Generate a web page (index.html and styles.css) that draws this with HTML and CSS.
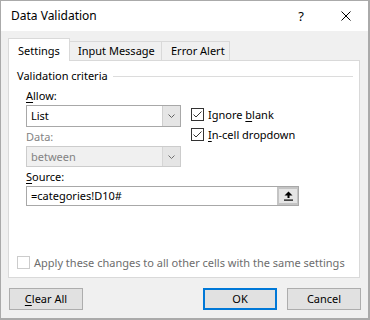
FILE: index.html
```html
<!DOCTYPE html>
<html>
<head>
<meta charset="utf-8">
<link rel="stylesheet" href="styles.css">
</head>
<body>
<div class="window">
  <div class="titlebar">
    <span class="title">Data Validation</span>
    <span class="help">?</span>
    <svg class="close" width="10" height="10" viewBox="0 0 10 10"><path d="M0.5 0.5 L9.5 9.5 M9.5 0.5 L0.5 9.5" stroke="#000" stroke-width="1" fill="none"/></svg>
  </div>
  <div class="client">
    <div class="tabs">
      <div class="tab active">Settings</div>
      <div class="tab">Input Message</div>
      <div class="tab">Error Alert</div>
    </div>
    <div class="panel">
      <div class="group-title"><span>Validation criteria</span><span class="rule"></span></div>
      <div class="criteria">
        <div class="row-top">
          <div class="left-col">
            <div class="label"><u>A</u>llow:</div>
            <div class="combo">
              <span class="value">List</span>
              <span class="drop"><svg width="7" height="4" viewBox="0 0 7 4"><path d="M0.5 0.5 L3.5 3.5 L6.5 0.5" stroke="#606060" fill="none"/></svg></span>
            </div>
            <div class="label disabled">Data:</div>
            <div class="combo off">
              <span class="value">between</span>
              <span class="drop"><svg width="7" height="4" viewBox="0 0 7 4"><path d="M0.5 0.5 L3.5 3.5 L6.5 0.5" stroke="#707070" fill="none"/></svg></span>
            </div>
          </div>
          <div class="right-col">
            <div class="check"><span class="box"><svg width="11" height="11" viewBox="0 0 11 11"><path d="M1.5 5.5 L4 8 L9.5 2.5" stroke="#333" stroke-width="1" fill="none"/></svg></span><span>Ignore <u>b</u>lank</span></div>
            <div class="check"><span class="box"><svg width="11" height="11" viewBox="0 0 11 11"><path d="M1.5 5.5 L4 8 L9.5 2.5" stroke="#333" stroke-width="1" fill="none"/></svg></span><span><u>I</u>n-cell dropdown</span></div>
          </div>
        </div>
        <div class="label"><u>S</u>ource:</div>
        <div class="source">
          <span class="value">=categories!D10#</span>
          <span class="pick"><svg width="9" height="10" viewBox="0 0 9 10"><path d="M4.5 0.5 L8.5 4.5 L5.5 4.5 L5.5 7 L3.5 7 L3.5 4.5 L0.5 4.5 Z" fill="#000"/><rect x="0" y="8.5" width="9" height="1.2" fill="#000"/></svg></span>
        </div>
      </div>
      <div class="apply"><span class="box dis"></span><span>Apply these changes to all other cells with the same settings</span></div>
    </div>
    <div class="buttons">
      <div class="btn"><u>C</u>lear All</div>
      <div class="spacer"></div>
      <div class="btn default">OK</div>
      <div class="btn">Cancel</div>
    </div>
  </div>
</div>
</body>
</html>
```
FILE: styles.css
```css
html, body {
  margin: 0;
  padding: 0;
  background: #fff;
}
body {
  font-family: "Noto Sans", "Open Sans", sans-serif;
  font-size: 11px;
  color: #000;
  white-space: nowrap;
}
u { text-decoration: underline; text-underline-offset: 2px; }
.window {
  width: 370px;
  height: 320px;
  box-sizing: border-box;
  border: 1px solid #aaaaaa;
  border-right-width: 2px;
  border-bottom-width: 2px;
  display: flex;
  flex-direction: column;
  background: #f0f0f0;
}
.titlebar {
  height: 30px;
  background: #fff;
  display: flex;
  align-items: center;
  padding-left: 10px;
  flex: none;
  font-size: 12px;
}
.title { flex: 1; line-height: 16px; }
.help { font-size: 13px; margin-right: 37px; }
.close { margin-right: 17px; }
.client {
  flex: 1;
  padding: 7px 7px 0 7px;
  display: flex;
  flex-direction: column;
}
.tabs {
  display: flex;
  align-items: flex-end;
  height: 22px;
  position: relative;
  z-index: 1;
}
.tab {
  height: 19px;
  box-sizing: border-box;
  border: 1px solid #d9d9d9;
  border-bottom: none;
  line-height: 18px;
  background: #f0f0f0;
  margin-left: -1px;
}
.tab:nth-child(2) { width: 93px; padding: 0 0 0 8px; }
.tab:nth-child(3) { width: 69px; padding: 0 0 0 9px; }
.tab.active {
  height: 23px;
  margin-bottom: -1px;
  background: #fff;
  width: 62px;
  padding: 0 0 0 9px;
  line-height: 24px;
  margin-left: 0;
}
.panel {
  height: 218px;
  box-sizing: border-box;
  width: 352px;
  background: #fff;
  border: 1px solid #d9d9d9;
  display: flex;
  flex-direction: column;
  padding: 7px 0 7px 8px;
}
.group-title {
  display: flex;
  align-items: center;
  line-height: 16px;
  height: 16px;
}
.rule {
  flex: 1;
  height: 1px;
  background: #dcdcdc;
  margin-left: 5px;
  margin-right: 6px;
}
.criteria {
  padding-left: 9px;
  margin-top: 4px;
  flex: 1;
}
.row-top { display: flex; }
.left-col { width: 155px; }
.label { line-height: 16px; height: 16px; }
.label.disabled { color: #838383; margin-top: 2px; }
.combo {
  margin-top: 1px;
  height: 22px;
  box-sizing: border-box;
  border: 1px solid #a8a8a8;
  display: flex;
  align-items: stretch;
  background: #fff;
}
.combo .value { flex: 1; padding-left: 4px; line-height: 20px; }
.combo .drop {
  width: 17px;
  background: #e5e5e5;
  border-left: 1px solid #cfcfcf;
  display: flex;
  align-items: center;
  justify-content: center;
}
.combo.off {
  height: 21px;
  border-color: #cccccc;
  background: #f0f0f0;
  color: #838383;
}
.combo.off .value { line-height: 19px; }
.combo.off .drop { background: #e5e5e5; border-left-color: #d6d6d6; }
.right-col { margin-left: 10px; padding-top: 16px; }
.check {
  height: 20px;
  display: flex;
  align-items: center;
}
.box {
  width: 13px;
  height: 13px;
  flex: none;
  box-sizing: border-box;
  border: 1px solid #333;
  background: #fff;
  margin-right: 4px;
  display: flex;
  align-items: center;
  justify-content: center;
}
.box.dis { border-color: #cccccc; }
.criteria > .label { margin-top: 2px; }
.source {
  margin-top: 1px;
  width: 273px;
  height: 20px;
  box-sizing: border-box;
  border: 1px solid #a8a8a8;
  display: flex;
}
.source .value { flex: 1; padding-left: 4px; line-height: 18px; }
.pick {
  width: 21px;
  box-sizing: border-box;
  background: #e5e5e5;
  border: 2px solid #c4c4c4;
  border-right-width: 1px;
  display: flex;
  align-items: center;
  justify-content: center;
}
.apply {
  display: flex;
  align-items: center;
  height: 16px;
  color: #6d6d6d;
}
.buttons {
  display: flex;
  margin-top: 10px;
  padding-left: 1px;
}
.spacer { flex: 1; }
.btn {
  width: 74px;
  height: 22px;
  box-sizing: border-box;
  border: 1px solid #adadad;
  background: #e1e1e1;
  text-align: center;
  line-height: 20px;
}
.btn.default { border: 2px solid #0078d7; line-height: 18px; margin-right: 10px; }
```
